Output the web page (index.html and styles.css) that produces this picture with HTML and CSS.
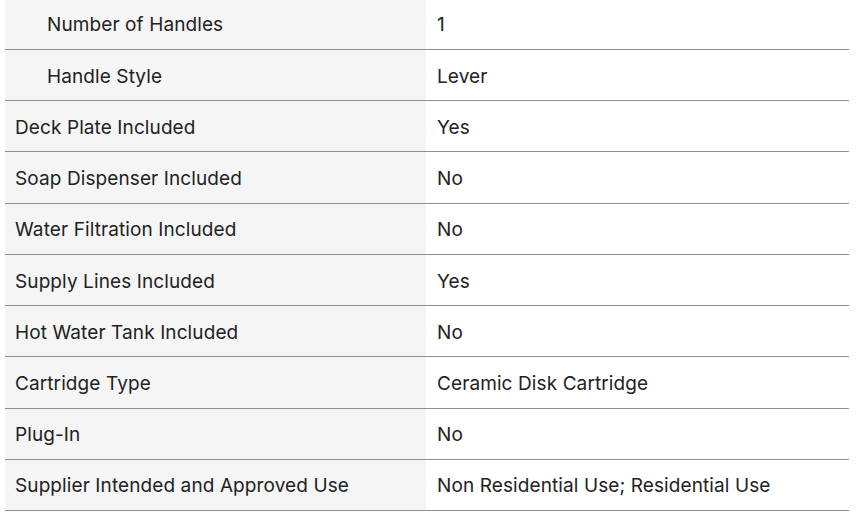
FILE: index.html
```html
<!DOCTYPE html>
<html>
<head>
<meta charset="utf-8">
<link rel="stylesheet" href="styles.css">
</head>
<body>
<div class="specs">
  <div class="row"><div class="label sub">Number of Handles</div><div class="value">1</div></div>
  <div class="row"><div class="label sub">Handle Style</div><div class="value">Lever</div></div>
  <div class="row"><div class="label">Deck Plate Included</div><div class="value">Yes</div></div>
  <div class="row"><div class="label">Soap Dispenser Included</div><div class="value">No</div></div>
  <div class="row"><div class="label">Water Filtration Included</div><div class="value">No</div></div>
  <div class="row"><div class="label">Supply Lines Included</div><div class="value">Yes</div></div>
  <div class="row"><div class="label">Hot Water Tank Included</div><div class="value">No</div></div>
  <div class="row"><div class="label">Cartridge Type</div><div class="value">Ceramic Disk Cartridge</div></div>
  <div class="row"><div class="label">Plug-In</div><div class="value">No</div></div>
  <div class="row"><div class="label">Supplier Intended and Approved Use</div><div class="value">Non Residential Use; Residential Use</div></div>
</div>
</body>
</html>
```
FILE: styles.css
```css
html, body {
  margin: 0;
  padding: 0;
  background: #ffffff;
}
body {
  font-family: Inter, "Open Sans", sans-serif;
  font-size: 19px;
  letter-spacing: 0.1px;
  color: #222222;
}
.specs {
  margin: -1.2px 11px 0 5px;
}
.row {
  display: grid;
  grid-template-columns: 421px 1fr;
  height: 50.22px;
  border-bottom: 1px solid #8f8f8f;
}
.label {
  background: #f5f5f5;
  padding: 2px 0 0 10px;
  display: flex;
  align-items: center;
}
.label.sub {
  padding-left: 42px;
}
.value {
  padding: 2px 0 0 11px;
  display: flex;
  align-items: center;
}
```
